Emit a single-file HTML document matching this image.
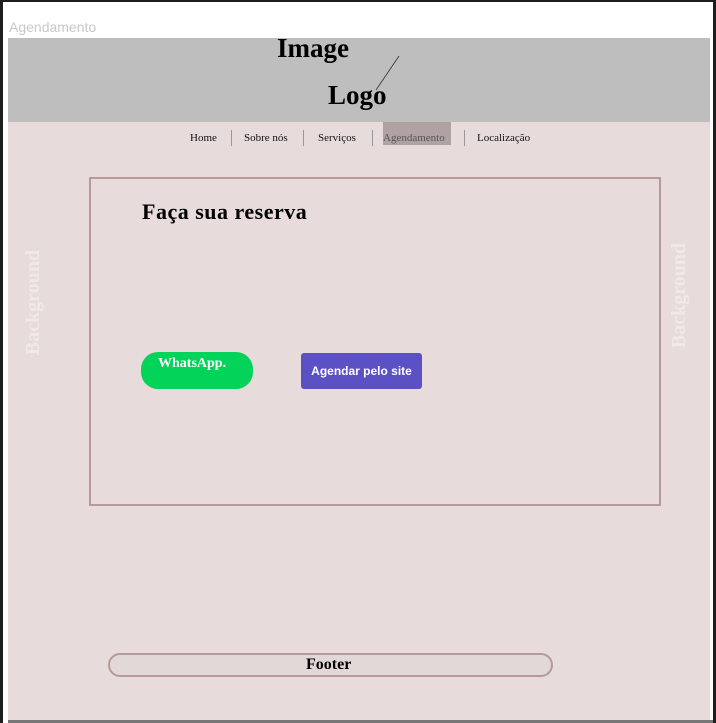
<!DOCTYPE html>
<html><head><meta charset="utf-8"><style>
*{margin:0;padding:0;box-sizing:border-box}
html,body{width:716px;height:723px;overflow:hidden;background:#1e1e1e;position:relative;font-family:"Liberation Serif",serif}
.frame{position:absolute;left:3px;top:2px;width:710px;height:721px;background:#fff}
.lbl{position:absolute;left:9px;top:19px;font-family:"Liberation Sans",sans-serif;font-size:14px;color:#c8c8c8}
.hdr{position:absolute;left:8px;top:38px;width:702px;height:84px;background:#bebebe}
.pink{position:absolute;left:8px;top:122px;width:702px;height:598px;background:#e8dbdb}
.bot{position:absolute;left:8px;top:720px;width:705px;height:3px;background:#777}
.t{position:absolute;color:#000;font-weight:bold;white-space:nowrap}
.nav{position:absolute;top:132px;font-size:11px;color:#111}
.sep{position:absolute;top:130px;width:1px;height:16px;background:#999}
.box{position:absolute;left:89px;top:177px;width:572px;height:329px;border:2px solid #b69a9a}
.bg{position:absolute;font-family:"Liberation Serif",serif;font-weight:bold;font-size:20px;color:#f1e8e8;transform:rotate(-90deg);white-space:nowrap}
</style></head><body>
<div class="frame"></div>
<div class="lbl">Agendamento</div>
<div class="hdr"></div>
<div class="t" style="left:277px;top:33px;font-size:27px">Image</div>
<div class="t" style="left:328px;top:80px;font-size:27px">Logo</div>
<svg style="position:absolute;left:370px;top:54px" width="32" height="40"><line x1="29" y1="2" x2="6" y2="36" stroke="#333" stroke-width="0.8"/></svg>
<div class="pink"></div>
<div style="position:absolute;left:383px;top:122px;width:68px;height:23px;background:#b0a2a2"></div>
<div class="nav" style="left:190px">Home</div>
<div class="sep" style="left:231px"></div>
<div class="nav" style="left:244px">Sobre nós</div>
<div class="sep" style="left:303px"></div>
<div class="nav" style="left:318px">Serviços</div>
<div class="sep" style="left:372px"></div>
<div class="nav" style="left:383px;color:#555">Agendamento</div>
<div class="sep" style="left:464px"></div>
<div class="nav" style="left:477px">Localização</div>
<div class="box"></div>
<div class="t" style="left:142px;top:199px;font-size:22px;letter-spacing:0.5px">Faça sua reserva</div>
<div style="position:absolute;left:141px;top:352px;width:112px;height:37px;border-radius:17px;background:#04d35a"></div>
<div class="t" style="left:158px;top:356px;font-size:14px;color:#fff">WhatsApp.</div>
<div style="position:absolute;left:301px;top:353px;width:121px;height:36px;border-radius:3px;background:#5b51c4;color:#fff;font-family:'Liberation Sans',sans-serif;font-weight:bold;font-size:12px;line-height:36px;text-align:center">Agendar pelo site</div>
<div class="bg" style="left:-19px;top:291px">Background</div>
<div class="bg" style="left:627px;top:284px">Background</div>
<div style="position:absolute;left:108px;top:653px;width:445px;height:24px;border:2px solid #b69a9a;border-radius:12px;background:#e2d8d8"></div>
<div class="t" style="left:306px;top:656px;font-size:16px">Footer</div>
<div class="bot"></div>
</body></html>
